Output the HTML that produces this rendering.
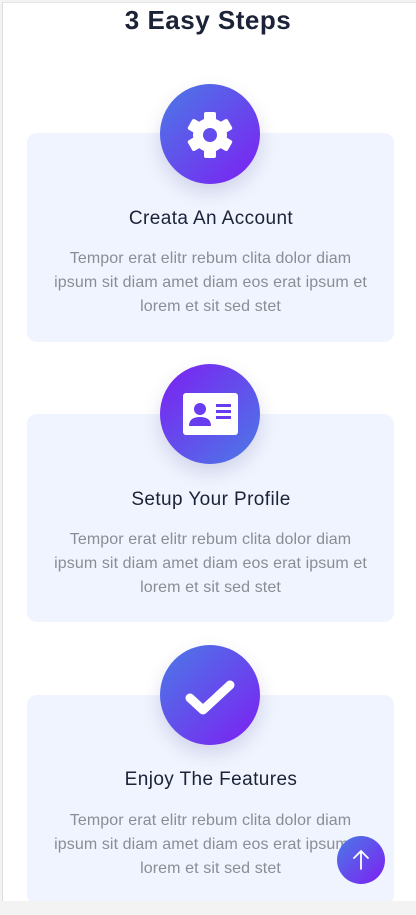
<!DOCTYPE html>
<html><head><meta charset="utf-8"><style>
html,body{margin:0;padding:0;}
body{width:416px;height:915px;background:#f3f3f3;position:relative;overflow:hidden;font-family:"Liberation Sans",sans-serif;}
.page{position:absolute;left:2px;top:2px;width:414px;height:899px;background:#fff;border-left:1px solid #ddd;border-top:1px solid #e4e4e4;}
h1{position:absolute;left:0;top:5px;width:416px;margin:0;text-align:center;font-size:26px;font-weight:bold;color:#1c2237;letter-spacing:0.5px;}
.card{position:absolute;left:27px;width:367px;background:#eff4fe;border-radius:10px;}
.circ{position:absolute;left:160px;width:100px;height:100px;border-radius:50%;box-shadow:0 8px 18px rgba(80,60,140,0.18);}
.g1{background:linear-gradient(135deg,#4a7be6,#7d1ff2);}
.g2{background:linear-gradient(135deg,#7d1ff2,#4a7be6);}
.circ svg{position:absolute;left:0;top:0;}
h3{position:absolute;left:0;width:422px;margin:0;text-align:center;font-size:19px;font-weight:normal;color:#1c2237;letter-spacing:0.4px;}
p{position:absolute;left:0;width:421px;margin:0;text-align:center;font-size:16px;line-height:24px;color:#8b8d95;letter-spacing:0.1px;}
.top{position:absolute;left:337px;top:836px;width:48px;height:48px;border-radius:50%;background:linear-gradient(135deg,#4a7be6,#7d1ff2);}
</style></head><body>
<div class="page"></div>
<h1>3 Easy Steps</h1>

<div class="card" style="top:133px;height:209px"></div>
<div class="circ g1" style="top:84px">
<svg width="100" height="100" viewBox="0 0 100 100">
<defs><mask id="m"><rect width="100" height="100" fill="#fff"/><circle cx="50" cy="51" r="7" fill="#000"/></mask></defs>
<g fill="#fff" mask="url(#m)">
<circle cx="50" cy="51" r="17"/>
<g transform="translate(50 51)">
<rect x="-6" y="-23" width="12" height="12" rx="2"/>
<rect x="-6" y="-23" width="12" height="12" rx="2" transform="rotate(60)"/>
<rect x="-6" y="-23" width="12" height="12" rx="2" transform="rotate(120)"/>
<rect x="-6" y="-23" width="12" height="12" rx="2" transform="rotate(180)"/>
<rect x="-6" y="-23" width="12" height="12" rx="2" transform="rotate(240)"/>
<rect x="-6" y="-23" width="12" height="12" rx="2" transform="rotate(300)"/>
</g></g></svg></div>
<h3 style="top:208px">Creata An Account</h3>
<p style="top:247px">Tempor erat elitr rebum clita dolor diam<br>ipsum sit diam amet diam eos erat ipsum et<br>lorem et sit sed stet</p>

<div class="card" style="top:414px;height:208px"></div>
<div class="circ g2" style="top:364px">
<svg width="100" height="100" viewBox="0 0 100 100">
<rect x="23" y="29" width="55" height="42" rx="3" fill="#fff"/>
<circle cx="40" cy="45" r="6" fill="#6a3cf0"/>
<path d="M29 62 q0-9 11-9 q11 0 11 9 z" fill="#6a3cf0"/>
<rect x="56" y="40" width="15" height="3" fill="#6a3cf0"/>
<rect x="56" y="46" width="15" height="3" fill="#6a3cf0"/>
<rect x="56" y="52" width="15" height="3" fill="#6a3cf0"/>
</svg></div>
<h3 style="top:489px">Setup Your Profile</h3>
<p style="top:528px">Tempor erat elitr rebum clita dolor diam<br>ipsum sit diam amet diam eos erat ipsum et<br>lorem et sit sed stet</p>

<div class="card" style="top:695px;height:210px"></div>
<div class="circ g1" style="top:645px">
<svg width="100" height="100" viewBox="0 0 100 100">
<path d="M30 53 L43 65 L70 40" fill="none" stroke="#fff" stroke-width="9" stroke-linecap="round" stroke-linejoin="round"/>
</svg></div>
<h3 style="top:769px">Enjoy The Features</h3>
<p style="top:809px">Tempor erat elitr rebum clita dolor diam<br>ipsum sit diam amet diam eos erat ipsum et<br>lorem et sit sed stet</p>

<div style="position:absolute;left:0;top:901px;width:416px;height:14px;background:#f3f3f3"></div>
<div class="top"><svg width="48" height="48" viewBox="0 0 48 48"><path d="M24 33 V15 M17 22 L24 15 L31 22" fill="none" stroke="#fff" stroke-width="1.8" stroke-linecap="round"/></svg></div>
</body></html>
